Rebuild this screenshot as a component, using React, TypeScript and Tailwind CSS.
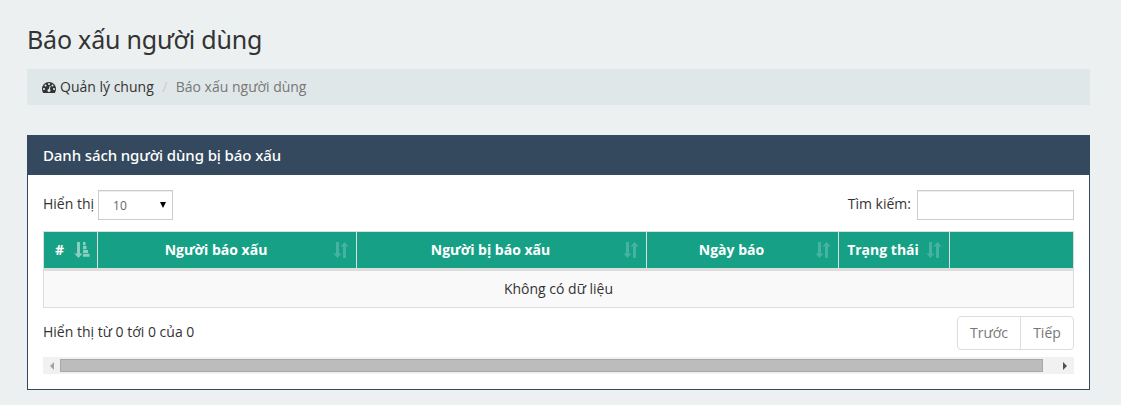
import React from "react";

const columns = [
  { label: "#", width: "w-[54px]", pad: "pl-2 pr-[30px]", sort: "asc" },
  { label: "Người báo xấu", width: "w-[259px]", pad: "pl-2 pr-[30px]", sort: "both" },
  { label: "Người bị báo xấu", width: "w-[290px]", pad: "pl-2 pr-[30px]", sort: "both" },
  { label: "Ngày báo", width: "w-[192px]", pad: "pl-2 pr-[30px]", sort: "both" },
  { label: "Trạng thái", width: "w-[111px]", pad: "pl-2 pr-[30px]", sort: "both" },
  { label: "", width: "w-[124px]", pad: "", sort: "none" },
];

function DashboardIcon() {
  return (
    <svg width="14" height="14" viewBox="0 0 1792 1792" fill="currentColor" className="mr-1 shrink-0">
      <path d="M384 1152q0-53-37.5-90.5t-90.5-37.5-90.5 37.5-37.5 90.5 37.5 90.5 90.5 37.5 90.5-37.5 37.5-90.5zm192-448q0-53-37.5-90.5t-90.5-37.5-90.5 37.5-37.5 90.5 37.5 90.5 90.5 37.5 90.5-37.5 37.5-90.5zm428 481l101-382q6-26-7.5-48.5t-38.5-29.5-48 6.5-30 39.5l-101 382q-60 5-107 43.5t-63 98.5q-20 77 20 146t117 89 146-20 89-117q16-60-6-117t-72-91zm660-33q0-53-37.5-90.5t-90.5-37.5-90.5 37.5-37.5 90.5 37.5 90.5 90.5 37.5 90.5-37.5 37.5-90.5zm-640-640q0-53-37.5-90.5t-90.5-37.5-90.5 37.5-37.5 90.5 37.5 90.5 90.5 37.5 90.5-37.5 37.5-90.5zm448 192q0-53-37.5-90.5t-90.5-37.5-90.5 37.5-37.5 90.5 37.5 90.5 90.5 37.5 90.5-37.5 37.5-90.5zm320 448q0 261-141 483-19 29-54 29h-1402q-35 0-54-29-141-221-141-483 0-182 71-348t191-286 286-191 348-71 348 71 286 191 191 286 71 348z" />
    </svg>
  );
}

function SortIcon({ kind }: { kind: string }) {
  if (kind === "none") return null;
  return (
    <svg
      width="16"
      height="16"
      viewBox="0 0 16 16"
      fill="#fff"
      className={"absolute right-[7px] top-[10px] " + (kind === "asc" ? "opacity-50" : "opacity-20")}
    >
      <path d="M3 0h3v11.500h2.500L4.500 16 0.300 11.500H3z" />
      {kind === "asc" ? (
        <path d="M9 0h2.500v3.300H9zM9 4h3.500v3.300H9zM9 8h5v3H9zM9 11.700h6.500v3H9z" />
      ) : (
        <path d="M10 16h3V4.500h2.700L11.500 0 7.500 4.500H10z" />
      )}
    </svg>
  );
}

export default function App() {
  return (
    <div className="h-[405px] bg-[#ecf0f1] pl-[27px] pr-[31px] pt-[22px] font-['Open_Sans',sans-serif] text-[14px] leading-5 text-[#333]">
      <h1 className="h-[47px] whitespace-nowrap font-['Noto_Sans',sans-serif] text-[25px] leading-[34px] tracking-[-0.2px]">
        Báo xấu người dùng
      </h1>
      <nav className="flex h-9 items-center bg-[#dfe7e8] pl-[15px]">
        <DashboardIcon />
        <span>Quản lý chung</span>
        <span className="w-[22px] text-center text-[#ccc]">/</span>
        <span className="text-[#777]">Báo xấu người dùng</span>
      </nav>

      <section className="mt-[30px] h-[255px] border border-[#34495e] bg-white">
        <h2 className="flex h-[39px] items-center bg-[#34495e] pb-[2px] pl-[15px] font-['Noto_Sans',sans-serif] text-[15px] font-medium tracking-[-0.1px] text-white">
          Danh sách người dùng bị báo xấu
        </h2>
        <div className="px-[15px] pt-[15px]">
          <div className="flex h-[41px] items-start justify-between">
            <label className="flex items-center">
              <span className="-mt-[3px]">Hiển thị</span>
              <span className="ml-1 flex h-[30px] w-[75px] items-center justify-between border border-[#ccc] pl-[14px] pr-[6px] text-[12px] text-[#666] shadow-[inset_0_1px_1px_rgba(0,0,0,0.075)]">
                <span className="pt-px">10</span>
                <svg width="6" height="6" viewBox="0 0 6 6" className="text-black">
                  <path d="M0 0h6L3 6z" fill="currentColor" />
                </svg>
              </span>
            </label>
            <label className="flex items-center">
              <span className="-mt-[3px]">Tìm kiếm:</span>
              <input className="ml-[6px] h-[30px] w-[157px] border border-[#ccc] bg-white shadow-[inset_0_1px_1px_rgba(0,0,0,0.075)]" />
            </label>
          </div>
          <table className="w-[1031px] table-fixed border-separate border-spacing-0 border-l border-t border-[#ddd]">
            <thead>
              <tr>
                {columns.map((c, i) => (
                  <th
                    key={i}
                    className={"relative h-[39px] border-b-[3px] border-r border-[#ddd] bg-[#16a085] py-0 text-center font-bold whitespace-nowrap text-white " + c.width + " " + c.pad}
                  >
                    {c.label}
                    <SortIcon kind={c.sort} />
                  </th>
                ))}
              </tr>
            </thead>
            <tbody>
              <tr>
                <td colSpan={6} className="h-[37px] border-b border-r border-[#ddd] bg-[#f9f9f9] p-0 text-center">
                  Không có dữ liệu
                </td>
              </tr>
            </tbody>
          </table>
          <div className="mt-2 flex h-[34px] justify-between">
            <span className="pt-[6px]">Hiển thị từ 0 tới 0 của 0</span>
            <div className="flex rounded border border-[#ddd] text-[#777]">
              <span className="flex w-[63px] items-center justify-center border-r border-[#ddd]">Trước</span>
              <span className="flex w-[52px] items-center justify-center">Tiếp</span>
            </div>
          </div>
          <div className="mt-[7px] flex h-[17px] items-center bg-[#f1f1f1]">
            <span className="flex w-[17px] justify-center">
              <svg width="4" height="8" viewBox="0 0 4 8">
                <path d="M4 0v8L0 4z" fill="#a3a3a3" />
              </svg>
            </span>
            <span className="h-[13px] w-[983px] border border-[#a8a8a8] bg-[#bcbcbc]" />
            <span className="ml-auto mr-[7px]">
              <svg width="4" height="8" viewBox="0 0 4 8" className="block">
                <path d="M0 0v8l4-4z" fill="#505050" />
              </svg>
            </span>
          </div>
        </div>
      </section>
    </div>
  );
}
